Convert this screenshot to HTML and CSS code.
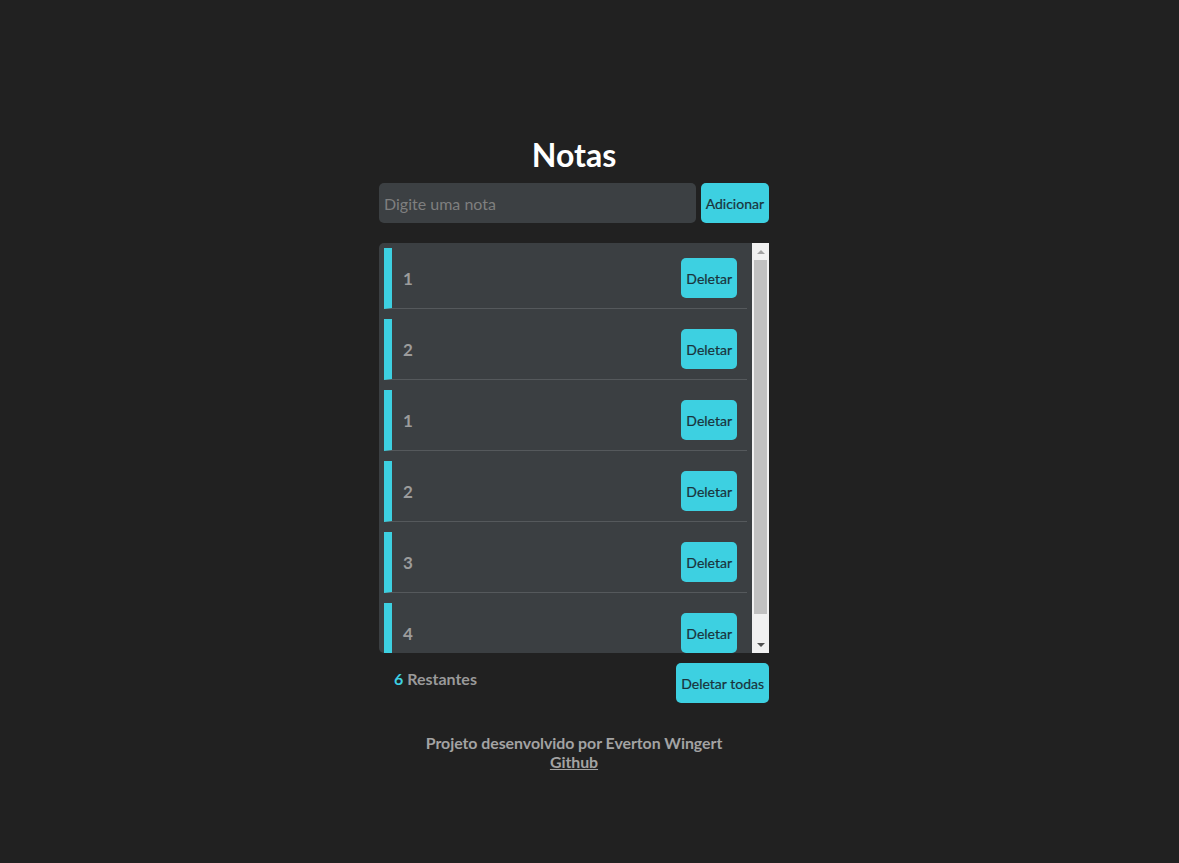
FILE: index.html
```html
<!DOCTYPE html>
<html lang="pt-BR">
<head>
<meta charset="utf-8">
<title>Notas</title>
<link rel="stylesheet" href="styles.css">
</head>
<body>
<main class="app">
  <h1 class="title">Notas</h1>
  <form class="add-form">
    <input class="note-input" type="text" placeholder="Digite uma nota">
    <button class="btn" type="button">Adicionar</button>
  </form>
  <div class="list-frame">
    <ul class="note-list">
      <li class="note"><span class="note-text">1</span><button class="btn" type="button">Deletar</button></li>
      <li class="note"><span class="note-text">2</span><button class="btn" type="button">Deletar</button></li>
      <li class="note"><span class="note-text">1</span><button class="btn" type="button">Deletar</button></li>
      <li class="note"><span class="note-text">2</span><button class="btn" type="button">Deletar</button></li>
      <li class="note"><span class="note-text">3</span><button class="btn" type="button">Deletar</button></li>
      <li class="note"><span class="note-text">4</span><button class="btn" type="button">Deletar</button></li>
    </ul>
    <div class="scrollbar" aria-hidden="true">
      <span class="sb-button"><span class="sb-arrow-up"></span></span>
      <span class="sb-track"><span class="sb-thumb"></span></span>
      <span class="sb-button"><span class="sb-arrow-down"></span></span>
    </div>
  </div>
  <div class="summary">
    <p class="remaining"><span class="count">6</span> Restantes</p>
    <button class="btn" type="button">Deletar todas</button>
  </div>
  <footer class="credits">
    <p>Projeto desenvolvido por Everton Wingert</p>
    <a href="#" class="link">Github</a>
  </footer>
</main>
</body>
</html>
```

FILE: styles.css
```css
html, body {
  margin: 0;
  padding: 0;
  background: #212121;
  height: 100%;
}

body {
  font-family: Lato, "Open Sans", "Liberation Sans", sans-serif;
  color: #a0a0a0;
  padding-right: 31px;
}

.app {
  width: 390px;
  margin: 0 auto;
  padding-top: 136px;
  display: flex;
  flex-direction: column;
}

.title {
  margin: 0 0 9px;
  font-size: 32px;
  font-weight: 700;
  line-height: 38px;
  color: #ffffff;
  text-align: center;
}

.add-form {
  display: flex;
  gap: 5px;
  margin: 0 0 20px;
}

.note-input {
  flex: 1;
  height: 40px;
  box-sizing: border-box;
  border: none;
  border-radius: 5px;
  background: #3c4043;
  padding: 0 5px;
  font-family: inherit;
  font-size: 16px;
  color: #ddd;
  outline: none;
}

.note-input::placeholder {
  color: #7f7f7f;
}

.btn {
  height: 40px;
  padding: 0 5px;
  border: none;
  border-radius: 5px;
  background: #3dd0e1;
  color: #1a333b;
  font-family: inherit;
  font-size: 14px;
  cursor: pointer;
  white-space: nowrap;
  -webkit-text-stroke: 0.2px #1a333b;
}

.list-frame {
  display: flex;
  height: 410px;
  background: #3b3f42;
  border-radius: 5px 0 0 5px;
  overflow: hidden;
}

.note-list {
  flex: 1;
  list-style: none;
  margin: 0;
  padding: 5px 0 0;
  overflow: hidden;
}

.scrollbar {
  width: 17px;
  flex: none;
  display: flex;
  flex-direction: column;
  background: #f1f1f1;
}

.sb-button {
  height: 17px;
  display: flex;
  align-items: center;
  justify-content: center;
}

.sb-arrow-up {
  width: 0;
  height: 0;
  border-left: 4px solid transparent;
  border-right: 4px solid transparent;
  border-bottom: 4px solid #a3a3a3;
}

.sb-arrow-down {
  width: 0;
  height: 0;
  border-left: 4px solid transparent;
  border-right: 4px solid transparent;
  border-top: 4px solid #505050;
}

.sb-track {
  flex: 1;
  padding: 0 2px;
}

.sb-thumb {
  display: block;
  height: 354px;
  background: #c1c1c1;
}

.note {
  display: flex;
  align-items: center;
  justify-content: space-between;
  height: 61px;
  box-sizing: border-box;
  margin: 0 5px 10px;
  padding: 10px 10px 10px 11px;
  border-left: 8px solid #3dd0e1;
  border-bottom: 1px solid #55595c;
}

.note-text {
  font-size: 17px;
  font-weight: 700;
  color: #9c9c9c;
}

.summary {
  display: flex;
  justify-content: space-between;
  align-items: flex-start;
  margin-top: 10px;
}

.remaining {
  margin: 6px 0 0 15px;
  font-size: 16px;
  font-weight: 700;
  color: #9a9a9a;
}

.count {
  color: #3dd0e1;
}

.credits {
  margin-top: 30px;
  text-align: center;
  font-size: 15.9px;
  letter-spacing: -0.04px;
  font-weight: 700;
  line-height: 19px;
  color: #a3a3a3;
}

.credits p {
  margin: 0;
}

.link {
  color: #a3a3a3;
  text-decoration: underline;
}
```
